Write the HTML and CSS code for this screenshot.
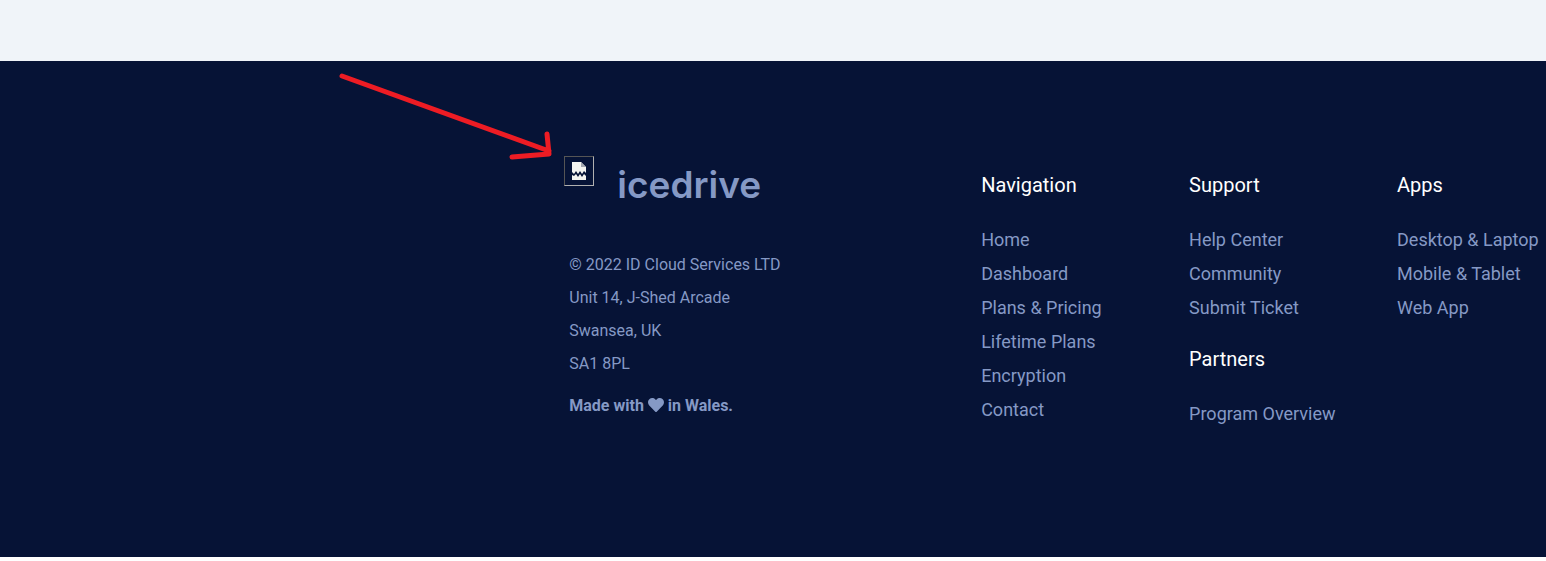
FILE: index.html
```html
<!DOCTYPE html>
<html lang="en">
<head>
    <meta charset="UTF-8">
    <meta name="viewport" content="width=device-width, initial-scale=1.0">
    <title>Icedrive</title>
    <link rel="stylesheet" href="styles.css">
</head>
<body>
<div class="page-end"></div>
<footer class="footer">
    <div class="brand-column">
        <a class="brand" href="#">
            <span class="logo-frame">
                <svg class="broken-image" viewBox="0 0 16 18" role="img" aria-label="Missing image">
                    <path fill="#f4f4f0" d="M1 0h9l5 5v6l-2-2-2 3-2-3-2 3-2-3-2 3-2-2z"/>
                    <path fill="#a4a8b0" d="M10 0l5 5h-5z"/>
                    <path fill="#f4f4f0" d="M1 13l2 1 2-2 2 3 2-3 2 3 2-3 2 2v4H1z"/>
                </svg>
            </span>
            <span class="brand-name">icedrive</span>
        </a>
        <svg class="arrow" viewBox="0 0 220 100" aria-hidden="true">
            <path d="M8 16L215 91M213 74L215 94L178 97"/>
        </svg>
        <address class="address">
            © 2022 ID Cloud Services LTD<br>
            Unit 14, J-Shed Arcade<br>
            Swansea, UK<br>
            SA1 8PL
        </address>
        <p class="made-with">Made with <svg class="heart" viewBox="0 0 512 512" role="img" aria-label="love"><path d="M462 62C408 16 326 25 276 76l-20 21-20-21C186 25 104 16 50 62c-63 54-66 150-10 208l193 200c13 13 33 13 46 0l193-200c56-58 53-154-10-208z"/></svg> in Wales.</p>
    </div>
    <nav class="link-column" aria-labelledby="navigation">
        <h2 id="navigation">Navigation</h2>
        <ul>
            <li><a href="#">Home</a></li>
            <li><a href="#">Dashboard</a></li>
            <li><a href="#">Plans &amp; Pricing</a></li>
            <li><a href="#">Lifetime Plans</a></li>
            <li><a href="#">Encryption</a></li>
            <li><a href="#">Contact</a></li>
        </ul>
    </nav>
    <div class="link-column">
        <h2>Support</h2>
        <ul>
            <li><a href="#">Help Center</a></li>
            <li><a href="#">Community</a></li>
            <li><a href="#">Submit Ticket</a></li>
        </ul>
        <h2>Partners</h2>
        <ul>
            <li><a href="#">Program Overview</a></li>
        </ul>
    </div>
    <div class="link-column">
        <h2>Apps</h2>
        <ul>
            <li><a href="#">Desktop &amp; Laptop</a></li>
            <li><a href="#">Mobile &amp; Tablet</a></li>
            <li><a href="#">Web App</a></li>
        </ul>
    </div>
</footer>
</body>
</html>
```
FILE: styles.css
```css
body {
    margin: 0;
    background-color: #ffffff;
    color: #8599c5;
    font-family: Roboto, sans-serif;
    font-size: 16px;
}

a {
    color: inherit;
    text-decoration: none;
}

.page-end {
    height: 61px;
    background-color: #f0f4f9;
}

.footer {
    display: grid;
    grid-template-columns: 417fr 208fr 208fr 149fr;
    padding: 95px 0 107px 36.5%;
    background-color: #061336;
}

.brand-column {
    position: relative;
}

.brand {
    display: flex;
    gap: 23px;
}

.logo-frame {
    display: flex;
    justify-content: center;
    align-items: center;
    box-sizing: border-box;
    width: 30px;
    height: 30px;
    border: 1px solid;
    border-color: #555555 #b0b0b0 #b0b0b0 #555555;
}

.broken-image {
    width: 16px;
    height: 18px;
}

.brand-name {
    font-family: Inter, sans-serif;
    font-size: 37px;
    font-weight: 600;
    line-height: 58px;
}

/* pointer to the missing logo */
.arrow {
    position: absolute;
    right: 100%;
    top: -96px;
    width: 220px;
    height: 100px;
    margin-right: 10px;
    fill: none;
    stroke: #ed1c24;
    stroke-width: 5;
    stroke-linecap: round;
    stroke-linejoin: round;
}

.address {
    margin: 34px 0 0 5px;
    font-style: normal;
    line-height: 33px;
}

.made-with {
    margin: 9px 0 0 5px;
    font-weight: bold;
    line-height: 33px;
}

.heart {
    width: 16px;
    height: 16px;
    fill: currentColor;
    vertical-align: -2px;
}

.link-column {
    padding-top: 14px;
    white-space: nowrap;
}

.link-column h2 {
    margin: 0 0 23px;
    color: #ffffff;
    font-size: 20px;
    font-weight: 400;
    line-height: 30px;
}

.link-column ul {
    margin: 0 0 19px;
    padding: 0;
    list-style: none;
    font-size: 18px;
    line-height: 34px;
}
```
